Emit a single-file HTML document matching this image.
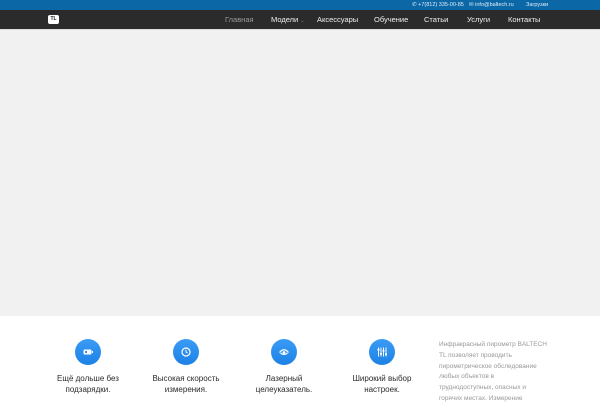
<!DOCTYPE html>
<html><head><meta charset="utf-8"><style>
*{margin:0;padding:0;box-sizing:border-box}
body{width:600px;height:400px;overflow:hidden;background:#fff;font-family:"Liberation Sans","DejaVu Sans",sans-serif;position:relative}
.top{position:absolute;left:0;top:0;width:600px;height:10px;background:#0b67a6;color:#dfeefa;font-size:5.5px;line-height:10px}
.top span{position:absolute;top:0}
.nav{position:absolute;left:0;top:10px;width:600px;height:19px;background:#2b2b2b;color:#f0f0f0;font-size:7.5px;line-height:19px}
.nav span{position:absolute;top:0}
.logo{position:absolute;left:48px;top:5px;width:11px;height:9px;background:#fff;border-radius:2px;color:#222;font-size:5px;font-weight:bold;line-height:9px;text-align:center}
.hero{position:absolute;left:0;top:29px;width:600px;height:287px;background:#f1f1f1;border-top:1px solid #ddd}
.ic{position:absolute;top:339px;width:26px;height:26px;border-radius:50%;background:linear-gradient(#3a9cf5,#1d82e6)}
.ic svg{position:absolute;left:7px;top:7px}
.t{position:absolute;top:373px;width:90px;text-align:center;font-size:8px;line-height:11px;color:#2a2a2a}
.side{position:absolute;left:439px;top:340px;width:130px;font-size:6.5px;line-height:10.8px;color:#999;white-space:nowrap}
</style></head><body>
<div class="top">
<span style="left:412px">✆ +7(812) 335-00-85</span>
<span style="left:469px">✉ info@baltech.ru</span>
<span style="left:526px">Загрузки</span>
</div>
<div class="nav">
<div class="logo">TL</div>
<span style="left:225px;color:#999">Главная</span>
<span style="left:271px">Модели <span style="position:static;color:#888;font-size:5px">⌄</span></span>
<span style="left:317px">Аксессуары</span>
<span style="left:374px">Обучение</span>
<span style="left:424px">Статьи</span>
<span style="left:467px">Услуги</span>
<span style="left:508px">Контакты</span>
</div>
<div class="hero"></div>

<div class="ic" style="left:75px"><svg width="12" height="12" viewBox="0 0 12 12"><rect x="1.5" y="3.5" width="8" height="5" rx="1" fill="#fff"/><rect x="10" y="5" width="1" height="2" fill="#fff"/><rect x="3" y="5" width="2" height="2" fill="#2a8ff0"/></svg></div>
<div class="ic" style="left:173px"><svg width="12" height="12" viewBox="0 0 12 12"><circle cx="6" cy="6" r="4" fill="none" stroke="#fff" stroke-width="1.2"/><path d="M6 3.8V6l1.5 1" stroke="#fff" stroke-width="1" fill="none"/></svg></div>
<div class="ic" style="left:271px"><svg width="12" height="12" viewBox="0 0 12 12"><path d="M1.5 6.5Q6 1 10.5 6.5" stroke="#fff" stroke-width="1.2" fill="none"/><path d="M2.5 7Q6 10 9.5 7" stroke="#fff" stroke-width="1.2" fill="none"/><circle cx="6" cy="6.5" r="1.4" fill="#fff"/></svg></div>
<div class="ic" style="left:369px"><svg width="12" height="12" viewBox="0 0 12 12"><g stroke="#fff" stroke-width="1"><path d="M2.5 1.5v9M5 1.5v9M7.5 1.5v9M10 1.5v9"/></g><g fill="#fff"><rect x="1.5" y="3" width="2" height="1.5"/><rect x="4" y="7" width="2" height="1.5"/><rect x="6.5" y="4" width="2" height="1.5"/><rect x="9" y="7.5" width="2" height="1.5"/></g></svg></div>

<div class="t" style="left:43px">Ещё дольше без<br>подзарядки.</div>
<div class="t" style="left:141px">Высокая скорость<br>измерения.</div>
<div class="t" style="left:239px">Лазерный<br>целеуказатель.</div>
<div class="t" style="left:337px">Широкий выбор<br>настроек.</div>
<div class="side">Инфракрасный пирометр BALTECH<br>TL позволяет проводить<br>пирометрическое обследование<br>любых объектов в<br>труднодоступных, опасных и<br>горячих местах. Измерение</div>
</body></html>
